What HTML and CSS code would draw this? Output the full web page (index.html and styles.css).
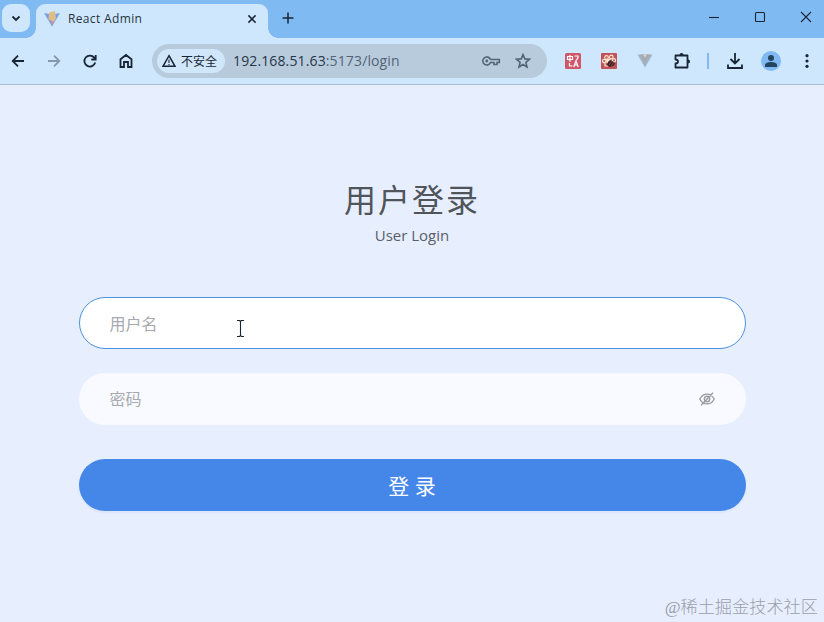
FILE: index.html
```html
<!DOCTYPE html>
<html lang="zh-CN">

<head>
    <meta charset="UTF-8" />
    <meta name="viewport" content="width=device-width, initial-scale=1.0" />
    <title>React Admin</title>
    <link rel="stylesheet" href="styles.css">
</head>

<body>
    <header class="browser">
        <div class="tab-strip">
            <div class="tab-search">
                <svg width="12" height="12" viewBox="0 0 12 12"><path d="M2.500 4.500 6 8 9.500 4.500" class="line" /></svg>
            </div>
            <div class="tab">
                <svg class="favicon" width="16" height="16" viewBox="0 0 16 16">
                    <path d="M0 2 8 15.500 16 2 8 3.500z" fill="#77a2dc" />
                    <path d="M5 1.500 11 0 12 7 8.500 14 7.500 9.500 4.500 9z" fill="#dfbd8b" />
                    <path d="M6.500 9.500 8 15.500 10 11z" fill="#b990bd" />
                </svg>
                <span class="tab-title">React Admin</span>
                <svg class="tab-close" width="10" height="10" viewBox="0 0 10 10"><path d="M1.400 1.400 8.600 8.600M8.600 1.400 1.400 8.600" class="line medium" /></svg>
            </div>
            <svg class="new-tab" width="12" height="12" viewBox="0 0 12 12"><path d="M6 .5v11M.5 6h11" class="line medium" /></svg>
            <div class="window-buttons">
                <svg width="12" height="12" viewBox="0 0 12 12"><path d="M1 6.500h10" class="line thin" /></svg>
                <svg width="12" height="12" viewBox="0 0 12 12"><rect x="1.500" y="1.500" width="9" height="9" rx="1" class="line thin" /></svg>
                <svg width="12" height="12" viewBox="0 0 12 12"><path d="M1 1 11 11M11 1 1 11" class="line thin" /></svg>
            </div>
        </div>

        <div class="toolbar">
            <div class="tool">
                <svg width="16" height="16" viewBox="0 0 16 16"><path d="M14 8H3M8 2.700 2.700 8 8 13.300" class="line" /></svg>
            </div>
            <div class="tool disabled">
                <svg width="16" height="16" viewBox="0 0 16 16"><path d="M2 8h11M8 2.700 13.300 8 8 13.300" class="line" /></svg>
            </div>
            <div class="tool">
                <svg width="16" height="16" viewBox="0 0 16 16"><path d="M13.200 9.500A5.500 5.500 0 1 1 12.200 4.600L13.500 6M13.700 2v4.500H9.300" class="line" /></svg>
            </div>
            <div class="tool">
                <svg width="16" height="16" viewBox="0 0 16 16"><path d="M2.500 6.300 8 2l5.500 4.300V14H10V9H6v5H2.500z" class="line" /></svg>
            </div>

            <div class="omnibox">
                <div class="chip">
                    <svg width="14" height="14" viewBox="0 0 14 14">
                        <path d="M7 1.700 13 12.300H1z" class="line chip-line" />
                        <path d="M7 5.500v3.500M7 10v1.200" class="line thin" />
                    </svg>
                    <span>不安全</span>
                </div>
                <div class="url">192.168.51.63<span>:5173/login</span></div>
                <svg class="key" width="20" height="14" viewBox="0 0 20 14">
                    <path d="M9.500 5.500a4 4 0 1 0 0 3H13v2h3v-2h2.300v-3z" class="line" />
                    <circle cx="5.800" cy="7" r="1.400" />
                </svg>
                <svg class="star" width="16" height="16" viewBox="0 0 16 16"><path d="m8 1.600 1.800 4.300 4.700.4-3.600 3.100 1.100 4.600-4-2.500-4 2.500 1.100-4.600-3.600-3.100 4.700-.4z" class="line" /></svg>
            </div>

            <div class="tool">
                <svg width="16" height="16" viewBox="0 0 16 16">
                    <rect width="16" height="16" rx="1.500" fill="#d0566a" />
                    <path d="M2.500 3.500h5v3h-5zM5 2v7M9.500 3H13v1.500L11.500 7M4.500 10v3h3M8.700 14l2.300-6 2.200 6M9.500 12h3" stroke="#fff" stroke-width="1.200" fill="none" />
                </svg>
            </div>
            <div class="tool">
                <svg width="16" height="16" viewBox="0 0 16 16">
                    <rect width="16" height="16" rx="1" fill="#c15358" />
                    <g stroke="#fae5cf" stroke-width="1.200" fill="none">
                        <circle cx="5.500" cy="4.500" r="1.800" />
                        <circle cx="10.300" cy="4" r="1.800" />
                        <circle cx="3.200" cy="8" r="1.700" />
                        <circle cx="13" cy="7.300" r="1.600" />
                        <path d="M4 10v3h3" />
                    </g>
                    <circle cx="7.500" cy="8" r="2.500" fill="#fae5cf" />
                    <path d="m7 9 2-2 2 1 2 1 1 2-2 2-3 1-3-2z" fill="#362326" />
                    <path d="m8 12 3-4M10 13l3-4" stroke="#c15358" stroke-width=".7" />
                </svg>
            </div>
            <div class="tool">
                <svg width="16" height="16" viewBox="0 0 16 16">
                    <path d="M.5 1.500h15L8 14.500z" fill="#9fb4c4" />
                    <path d="M3.500 1.500h9L8 9.500z" fill="#a9a9aa" />
                    <path d="M6.200 1.500h3.600L8 4.500z" fill="#dfdedb" />
                </svg>
            </div>
            <div class="tool">
                <svg class="puzzle" width="18" height="18" viewBox="0 0 18 18">
                    <path d="M2.500 3.500h12v12h-12v-4q2.500 0 2.500-2T2.500 7.500z" class="line" stroke-linejoin="round" />
                    <path d="M6.500 3a2 2 0 0 1 4 0zM15 7.500a2 2 0 0 1 0 4z" />
                </svg>
            </div>
            <div class="divider"></div>
            <div class="tool">
                <svg width="18" height="18" viewBox="0 0 18 18"><path d="M9 1v10M4.500 7 9 11.500 13.500 7M2 12.500V16h14v-3.500" class="line" /></svg>
            </div>
            <div class="tool">
                <div class="avatar">
                    <svg width="12" height="12" viewBox="0 0 12 12"><circle cx="6" cy="3" r="3" /><path d="M0 12v-2c0-4 12-4 12 0v2z" /></svg>
                </div>
            </div>
            <div class="tool">
                <svg width="4" height="16" viewBox="0 0 4 16"><circle cx="2" cy="2.700" r="1.600" /><circle cx="2" cy="8" r="1.600" /><circle cx="2" cy="13.300" r="1.600" /></svg>
            </div>
        </div>
    </header>

    <main class="login">
        <h1>用户登录</h1>
        <p class="subtitle">User Login</p>

        <form>
            <div class="field active">
                <input type="text" placeholder="用户名">
                <svg class="cursor" width="9" height="17" viewBox="0 0 9 17"><path d="M1 .5h2.500l1 1 1-1H8M4.500 1.500v14M1 16.500h2.500l1-1 1 1H8" class="line thin" /></svg>
            </div>
            <div class="field">
                <input type="password" placeholder="密码">
                <svg class="eye" width="16" height="16" viewBox="0 0 16 16">
                    <path d="M.8 8C4.200 1.500 11.800 1.500 15.200 8 11.800 14.500 4.200 14.500.8 8zM2.200 14.200 14 1.800" />
                    <circle cx="8" cy="8" r="2.700" />
                </svg>
            </div>
            <button type="button">登 录</button>
        </form>

        <div class="watermark">@稀土掘金技术社区</div>
    </main>
</body>

</html>
```

FILE: styles.css
```css
* {
    box-sizing: border-box;
}

body {
    margin: 0;
    height: 622px;
    display: flex;
    flex-direction: column;
    overflow: hidden;
    font-family: "Open Sans", "Noto Sans CJK SC", sans-serif;
    background: #e7eefe;
}

svg {
    display: block;
    flex: none;
    fill: #172536;
}

.line {
    fill: none;
    stroke: #172536;
    stroke-width: 1.8;
}

.medium {
    stroke-width: 1.5;
}

.thin {
    stroke-width: 1.1;
}

/* browser window */
.browser {
    flex: none;
    height: 85px;
    background: #cfe7fc;
    border-bottom: 1px solid #a9bfd5;
}

.tab-strip {
    display: flex;
    height: 38px;
    background: #80baf2;
}

.tab-search {
    display: flex;
    align-items: center;
    justify-content: center;
    width: 28px;
    height: 28px;
    margin: 4px 6px 0 2px;
    border-radius: 9px;
    background: #cfe7fc;
}

.tab {
    position: relative;
    display: flex;
    align-items: center;
    width: 232px;
    margin-top: 4px;
    padding: 0 11px 5px 8px;
    border-radius: 9px 9px 0 0;
    background: #cfe7fc;
}

/* curved feet of the tab */
.tab::before,
.tab::after {
    content: "";
    position: absolute;
    bottom: 0;
    width: 10px;
    height: 10px;
}

.tab::before {
    left: -10px;
    background: radial-gradient(circle at 0 0, transparent 9.5px, #cfe7fc 10px);
}

.tab::after {
    right: -10px;
    background: radial-gradient(circle at 100% 0, transparent 9.5px, #cfe7fc 10px);
}

.tab-title {
    flex: 1;
    margin-left: 8px;
    font-size: 12px;
    letter-spacing: 0.35px;
    color: #253443;
}

.new-tab {
    margin: 12px 0 0 14px;
}

.window-buttons {
    display: flex;
    gap: 34px;
    margin: 11px 12px 0 auto;
}

.toolbar {
    display: flex;
    align-items: center;
    height: 46px;
}

.tool {
    display: flex;
    align-items: center;
    justify-content: center;
    flex: none;
    width: 36px;
}

.disabled {
    opacity: 0.4;
}

.omnibox {
    display: flex;
    align-items: center;
    flex: none;
    width: 395px;
    height: 34px;
    margin: 0 8px;
    padding: 0 16px 0 5px;
    border-radius: 17px;
    background: #b8cbdd;
}

.chip {
    display: flex;
    align-items: center;
    gap: 5px;
    width: 68px;
    height: 24px;
    padding-left: 5px;
    border-radius: 12px;
    background: #d0e6fa;
    font-size: 12px;
    color: #172536;
    white-space: nowrap;
}

.chip-line {
    stroke-width: 1.5;
}

.url {
    flex: 1;
    margin-left: 8px;
    padding-bottom: 1px;
    font-size: 14px;
    letter-spacing: 0.13px;
    color: #273647;
}

.url span {
    color: #526476;
}

.key,
.star {
    fill: #526476;
}

.key .line,
.star .line {
    stroke: #526476;
    stroke-width: 1.6;
}

.star {
    margin-left: 14px;
}

.puzzle {
    margin: 0 0 1px 2px;
}

.divider {
    flex: none;
    width: 2px;
    height: 16px;
    margin: 0 8px;
    background: #80baf2;
}

.avatar {
    display: flex;
    align-items: center;
    justify-content: center;
    width: 20px;
    height: 20px;
    border-radius: 50%;
    background: #80baf2;
}

.avatar svg {
    fill: #25445f;
}

/* login page */
.login {
    flex: 1;
    display: flex;
    flex-direction: column;
    align-items: center;
    padding-top: 91px;
}

h1 {
    margin: 0;
    font-size: 32px;
    font-weight: 400;
    line-height: 48px;
    letter-spacing: 2px;
    color: #50545b;
}

.subtitle {
    margin: 0;
    font-size: 15px;
    line-height: 22px;
    color: #595e68;
}

form {
    width: 667px;
    margin-top: 51px;
}

.field {
    position: relative;
    display: flex;
    align-items: center;
    height: 52px;
    margin-bottom: 24px;
    padding: 0 31px;
    border-radius: 26px;
    background: #f8faff;
}

.field.active {
    padding: 2px 30px 0;
    border: 1px solid #4b91df;
    background: #fff;
}

input {
    flex: 1;
    padding: 0;
    border: 0;
    outline: 0;
    background: none;
    font-family: inherit;
    font-size: 16px;
}

input::placeholder {
    color: #a6a9ae;
}

.cursor {
    position: absolute;
    left: 156px;
    top: 22px;
}

.eye {
    fill: none;
    stroke: #999c9f;
    stroke-width: 1.4;
}

button {
    display: block;
    width: 100%;
    height: 52px;
    margin-top: 34px;
    padding: 0;
    border: 0;
    border-radius: 26px;
    background: #4586e9;
    box-shadow: 0 2px 2px rgba(69, 134, 233, 0.08);
    font-family: inherit;
    font-size: 21px;
    font-weight: 400;
    color: #fff;
}

.watermark {
    align-self: flex-end;
    margin: auto 6px 2px 0;
    font-family: "Liberation Serif", "Noto Sans CJK SC", serif;
    font-size: 17.2px;
    font-weight: 300;
    line-height: 24px;
    color: #9b9fab;
}
```
